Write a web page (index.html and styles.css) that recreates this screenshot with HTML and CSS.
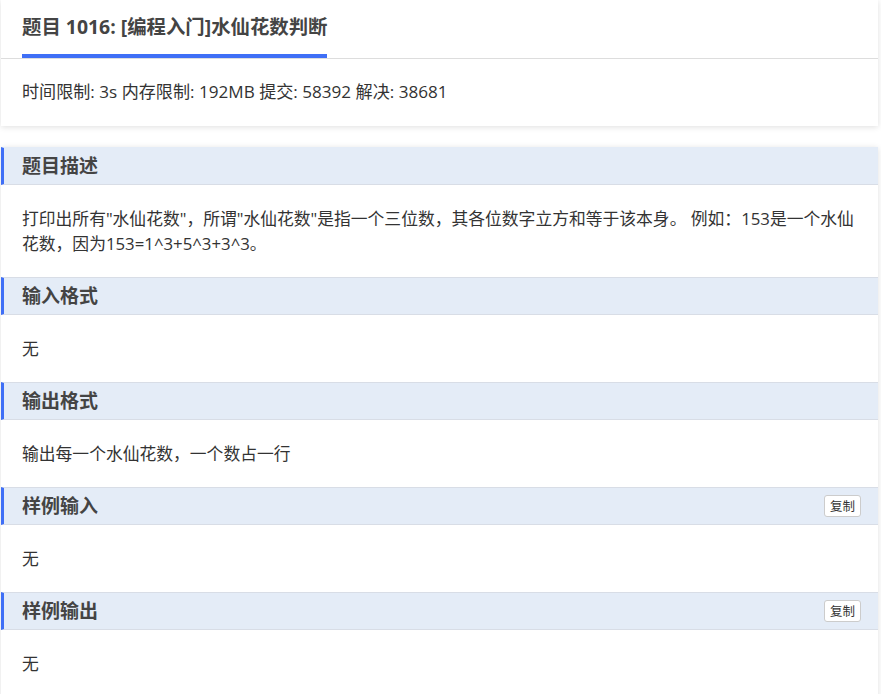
FILE: index.html
```html
<!DOCTYPE html>
<html lang="zh-CN">
<head>
<meta charset="utf-8">
<title>题目 1016</title>
<link rel="stylesheet" href="styles.css">
</head>
<body>
<div class="page">
  <div class="card top-card">
    <div class="title-bar">
      <h1 class="title">题目 1016: [编程入门]水仙花数判断</h1>
    </div>
    <div class="info">时间限制: 3s 内存限制: 192MB 提交: 58392 解决: 38681</div>
  </div>

  <div class="card main-card">
    <div class="sec-head first"><span class="sec-title">题目描述</span></div>
    <div class="sec-body">打印出所有"水仙花数"，所谓"水仙花数"是指一个三位数，其各位数字立方和等于该本身。 例如：153是一个水仙花数，因为153=1^3+5^3+3^3。</div>

    <div class="sec-head"><span class="sec-title">输入格式</span></div>
    <div class="sec-body">无</div>

    <div class="sec-head"><span class="sec-title">输出格式</span></div>
    <div class="sec-body">输出每一个水仙花数，一个数占一行</div>

    <div class="sec-head"><span class="sec-title">样例输入</span><button class="copy">复制</button></div>
    <div class="sec-body">无</div>

    <div class="sec-head"><span class="sec-title">样例输出</span><button class="copy">复制</button></div>
    <div class="sec-body">无</div>
  </div>
</div>
</body>
</html>
```
FILE: styles.css
```css
html, body {
  margin: 0;
  padding: 0;
  background: #ffffff;
}
body {
  font-family: "Open Sans", "Noto Sans CJK SC", sans-serif;
  color: #333333;
  overflow: hidden;
}
.page {
  padding: 0 3px 0 1px;
  display: flex;
  flex-direction: column;
  gap: 21px;
}
.card {
  background: #ffffff;
  box-shadow: 0 1px 6px rgba(0, 0, 0, 0.13);
}
.title-bar {
  padding: 0 21px;
  border-bottom: 1px solid #dddddd;
}
.title {
  display: inline-block;
  margin: 0;
  padding: 14px 0 14px;
  font-size: 19.4px;
  line-height: 26px;
  font-weight: 700;
  color: #444444;
  border-bottom: 4px solid #3f6ff6;
}
.info {
  padding: 20px 21px 21px;
  font-size: 17.1px;
  line-height: 26px;
  color: #333333;
}
.main-card {
  min-height: 560px;
}
.sec-head {
  display: flex;
  align-items: center;
  justify-content: space-between;
  height: 36px;
  padding: 0 17px 0 18px;
  background: #e4ecf7;
  border-left: 3px solid #3f6ff6;
  border-top: 1px solid #d8dde6;
  border-bottom: 1px solid #d8dde6;
}
.sec-head.first {
  border-top: 1px solid #e4ecf7;
}
.sec-title {
  font-size: 19px;
  font-weight: 700;
  color: #444444;
  line-height: 26px;
}
.sec-body {
  padding: 21px 21px 21px;
  font-size: 16.8px;
  line-height: 25px;
  color: #333333;
}
.copy {
  font-family: "Noto Sans CJK SC", sans-serif;
  font-size: 12.5px;
  line-height: 16px;
  padding: 2px 5px;
  background: #ffffff;
  color: #333333;
  border: 1px solid #cccccc;
  border-radius: 3px;
}
```
